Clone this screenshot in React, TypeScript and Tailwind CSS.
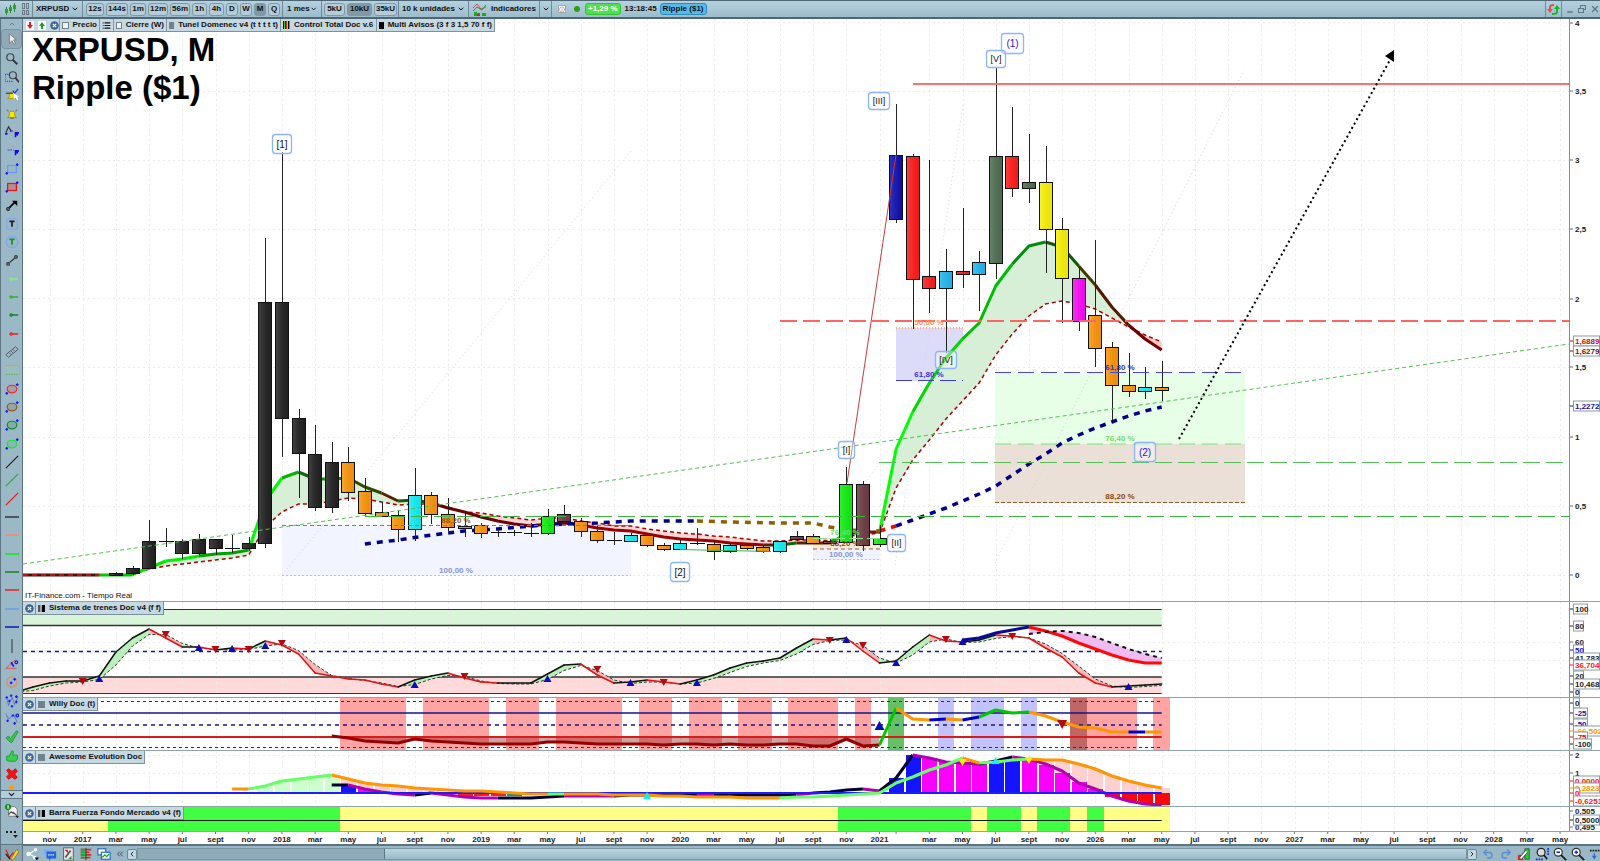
import type { ReactNode } from "react";
import { clsx } from "clsx";
import {
  ChevronDown,
  ChevronLeft,
  ChevronRight,
  ChevronUp,
  ChevronsLeft,
  Info,
  List,
  Minus,
  Redo2,
  Undo2,
  X as Close,
} from "lucide-react";

// Chart coordinates: one slot per month, slot 0 is January 2017.
const LEFT = 23;
const slot = (i: number) => Math.round((82.7 + 16.6 * i) * 10) / 10;

type Point = [number, number];

const path = (points: Point[]) =>
  points.map(([i, y], n) => `${n ? "L" : "M"}${slot(i)} ${y}`).join("");

const band = (a: Point[], b: Point[]) => `${path(a)}${path([...b].reverse()).replace("M", "L")}Z`;

const series = (from: number, values: number[]): Point[] =>
  values.map((y, n) => [from + n, y]);

const ORANGE = "#fb960c";
const CYAN = "#12f0f5";
const BLACK = "#222222";
const RED = "#ff1c1c";
const BROWN = "#6e3d45";
const GREEN = "#10f010";
const SKY = "#22b8f0";
const OLIVE = "#4f6f52";
const YELLOW = "#f9f208";

// slot, colour, high, body top, body bottom, low
const candles: [number, string, number, number, number, number][] = [
  [2, BLACK, 572, 573, 575, 576],
  [3, BLACK, 566, 568, 573, 575],
  [4, BLACK, 520, 541, 568, 569],
  [5, BLACK, 528, 541, 542, 547],
  [6, BLACK, 539, 541, 553, 559],
  [7, BLACK, 534, 539, 553, 555],
  [8, BLACK, 539, 539, 548, 555],
  [9, BLACK, 535, 548, 549, 553],
  [10, BLACK, 537, 543, 548, 551],
  [11, BLACK, 238, 302, 543, 548],
  [12, BLACK, 152, 302, 418, 457],
  [13, BLACK, 409, 418, 453, 498],
  [14, BLACK, 425, 454, 507, 511],
  [15, BLACK, 442, 462, 507, 513],
  [16, ORANGE, 447, 462, 492, 501],
  [17, ORANGE, 478, 491, 513, 517],
  [18, ORANGE, 502, 512, 516, 517],
  [19, ORANGE, 511, 515, 529, 542],
  [20, CYAN, 468, 495, 529, 541],
  [21, ORANGE, 492, 495, 514, 524],
  [22, ORANGE, 498, 514, 527, 531],
  [23, ORANGE, 513, 526, 528, 537],
  [24, ORANGE, 523, 525, 533, 538],
  [25, BLACK, 530, 532, 533, 537],
  [26, BLACK, 530, 532, 533, 536],
  [27, BLACK, 523, 533, 534, 537],
  [28, GREEN, 509, 516, 533, 535],
  [29, BROWN, 505, 514, 521, 521],
  [30, ORANGE, 518, 521, 531, 537],
  [31, ORANGE, 525, 531, 540, 543],
  [32, BLACK, 532, 540, 541, 545],
  [33, CYAN, 533, 535, 541, 542],
  [34, ORANGE, 533, 535, 545, 547],
  [35, ORANGE, 543, 545, 549, 551],
  [36, CYAN, 540, 543, 549, 550],
  [37, BROWN, 528, 543, 544, 545],
  [38, ORANGE, 541, 544, 551, 560],
  [39, CYAN, 543, 545, 551, 553],
  [40, ORANGE, 544, 545, 548, 550],
  [41, ORANGE, 545, 547, 551, 553],
  [42, CYAN, 541, 541, 551, 553],
  [43, BROWN, 531, 536, 539, 541],
  [44, ORANGE, 534, 536, 543, 544],
  [45, BROWN, 539, 541, 543, 544],
  [46, GREEN, 467, 484, 542, 543],
  [47, BROWN, 481, 484, 545, 551],
  [48, GREEN, 525, 538, 544, 547],
  [49, "#1010b0", 104, 155, 219, 223],
  [50, RED, 154, 156, 279, 329],
  [51, RED, 160, 276, 288, 313],
  [52, SKY, 249, 271, 288, 353],
  [53, RED, 208, 271, 274, 288],
  [54, SKY, 251, 262, 274, 311],
  [55, OLIVE, 68, 156, 263, 279],
  [56, RED, 107, 156, 188, 197],
  [57, OLIVE, 134, 182, 188, 203],
  [58, YELLOW, 146, 182, 229, 273],
  [59, YELLOW, 218, 229, 278, 323],
  [60, "#fc0cfa", 267, 278, 321, 331],
  [61, ORANGE, 240, 315, 348, 367],
  [62, ORANGE, 342, 347, 385, 421],
  [63, ORANGE, 353, 385, 391, 397],
  [64, CYAN, 367, 387, 391, 399],
  [65, ORANGE, 361, 387, 390, 401],
];

const tunnel = series(3, [
  574, 568, 561, 559, 556, 554, 553, 550, 501, 478, 472, 479, 479, 478, 487, 493, 501, 500, 503,
  508, 512, 517, 521, 524, 526, 524, 523, 525, 528, 530, 531, 534, 537, 539, 540, 541, 543, 544,
  545, 545, 543, 543, 543, 534, 532, 532, 449, 412, 383, 358, 339, 323, 286, 264, 246, 242, 247,
  266, 285, 307, 325, 339, 350,
]);

const tunnelSignal = series(3, [
  575, 569, 566, 564, 562, 560, 558, 555, 527, 512, 504, 504, 501, 498, 499, 502, 505, 504, 504,
  507, 512, 513, 516, 518, 520, 518, 518, 521, 523, 526, 526, 529, 531, 533, 534, 536, 537, 539,
  541, 541, 540, 540, 541, 536, 535, 533, 488, 460, 440, 419, 401, 383, 355, 334, 316, 304, 301,
  304, 309, 318, 327, 335, 342,
]);

const at = (points: Point[], from: number, to: number) =>
  points.filter(([i]) => i >= from && i <= to);

// from, to, colour
const tunnelColors: [number, number, string][] = [
  [3, 5, "#00e800"],
  [5, 7, "#00f200"],
  [7, 10, "#00a000"],
  [10, 12, "#00f800"],
  [12, 13, "#00b400"],
  [13, 14, "#0a6a0a"],
  [14, 16, "#00920c"],
  [16, 18, "#2c4a00"],
  [18, 19, "#552200"],
  [19, 21, "#1d5a00"],
  [21, 28, "#700000"],
  [28, 30, "#5c0c0c"],
  [30, 41, "#9c0000"],
  [41, 42, "#5a2400"],
  [42, 43, "#0a6a0a"],
  [43, 45, "#552800"],
  [45, 46, "#00b400"],
  [46, 48, "#7c1414"],
  [48, 50, "#00ff00"],
  [50, 53, "#00d800"],
  [53, 56, "#00bc00"],
  [56, 58, "#008c10"],
  [58, 60, "#145a00"],
  [60, 61, "#3c3c00"],
  [61, 63, "#501a00"],
  [63, 65, "#700000"],
];

const slowA: Point[] = [[17, 544], [19, 540], [21, 535], [23, 531], [25, 529], [27, 526], [29, 524], [31, 523], [33, 521], [37, 521]];
const slowB: Point[] = [[37, 521], [39, 522], [42, 523], [44, 523], [45, 527], [46, 530], [48, 531]];
const slowC = series(49, [526, 520, 514, 508, 501, 494, 486, 475, 464, 454, 443, 435, 428, 422, 416, 411, 407]);

const months: [number, string][] = [
  [-2, "nov"], [0, "2017"], [2, "mar"], [4, "may"], [6, "jul"], [8, "sept"], [10, "nov"],
  [12, "2018"], [14, "mar"], [16, "may"], [18, "jul"], [20, "sept"], [22, "nov"],
  [24, "2019"], [26, "mar"], [28, "may"], [30, "jul"], [32, "sept"], [34, "nov"],
  [36, "2020"], [38, "mar"], [40, "may"], [42, "jul"], [44, "sept"], [46, "nov"],
  [48, "2021"], [49, ""], [51, "mar"], [53, "may"], [55, "jul"], [57, "sept"], [59, "nov"],
  [61, "2026"], [63, "mar"], [65, "may"], [67, "jul"], [69, "sept"], [71, "nov"],
  [73, "2027"], [75, "mar"], [77, "may"], [79, "jul"], [81, "sept"], [83, "nov"],
  [85, "2028"], [87, "mar"], [89, "may"],
];

const trains = series(-4, [
  692, 687, 683, 681, 681, 676, 652, 638, 629, 638, 647, 647, 650, 648, 649, 641, 645, 654, 673,
  676, 679, 680, 684, 687, 680, 676, 673, 678, 682, 683, 683, 683, 674, 665, 664, 675, 683, 682,
  680, 682, 684, 680, 675, 668, 663, 661, 658, 648, 639, 640, 638, 651, 663, 661, 647, 635, 641,
  642, 640, 635, 636, 638, 648, 657, 673, 683, 687, 686, 685, 684,
]);
const trainsSignal: Point[] = trains.map(([i, y], n) => [i, n ? (y + trains[n - 1][1]) / 2 + 1 : y]);

const trainDowns: Point[] = [[0, 681], [5, 634], [8, 649], [10, 649], [12, 643], [23, 676], [31, 669], [35, 682], [45, 640], [47, 645], [52, 639], [56, 636]];
const trainUps: Point[] = [[1, 679], [7, 648], [9, 649], [11, 646], [20, 685], [28, 679], [33, 683], [37, 683], [46, 640], [49, 663], [53, 642], [63, 687]];

const trendUp = series(53, [640, 638, 633, 630, 627]);
const trendDown = series(57, [627, 631, 636, 643, 649, 655, 660, 663, 663]);
const trendDots = series(57, [634, 632, 631, 633, 637, 643, 649, 654, 658]);

// from, to, colour
const willyZones: [number, number, string][] = [
  [15.5, 19.5, "#ffa3a3"], [20.5, 24.5, "#ffa3a3"], [25.5, 27.5, "#ffa3a3"],
  [28.5, 32.5, "#ffa3a3"], [33.5, 35.5, "#ffa3a3"], [36.5, 38.5, "#ffa3a3"],
  [39.5, 41.5, "#ffa3a3"], [42.5, 45.5, "#ffa3a3"], [46.5, 47.5, "#ffa3a3"],
  [48.5, 49.5, "#66c166"], [51.5, 52.5, "#c2c2fc"], [53.5, 55.5, "#c2c2fc"],
  [56.5, 57.5, "#c2c2fc"], [59.5, 60.5, "#bf6666"], [60.5, 63.5, "#ffa3a3"],
  [64.5, 65.5, "#ffa3a3"],
];

const willy = series(15, [
  736, 738, 741, 742, 743, 739, 741, 742, 743, 744, 744, 744, 744, 742, 742, 743, 744, 744, 744,
  744, 745, 744, 744, 745, 744, 745, 745, 744, 744, 746, 746, 739, 746, 745, 708, 719, 720, 719,
  720, 717, 710, 713, 712, 716, 722, 727, 728, 732, 732, 732, 732,
]);
const willyColors: [number, number, string][] = [
  [15, 48, "#980000"], [48, 49, "#00c800"], [49, 51, "#ff9500"], [51, 52, "#0000c8"],
  [52, 53, "#ff9500"], [53, 54, "#0000c8"], [54, 57, "#00c800"], [57, 63, "#ff9500"],
  [63, 64, "#0000c8"], [64, 65, "#ff9500"],
];

const awesomeSlow = series(9, [
  789, 789, 786, 781, 779, 777, 775, 779, 783, 785, 786, 788, 789, 790, 791, 791, 792, 793, 794,
  794, 794, 794, 794, 795, 795, 795, 796, 796, 797, 797, 797, 798, 798, 798, 797, 797, 796, 795,
  794, 793, 783, 777, 770, 765, 758, 763, 762, 760, 759, 760, 760, 764, 769, 776, 781, 785, 788,
]);
const awesomeSlowColors: [number, number, string][] = [
  [9, 10, "#ff9500"], [10, 15, "#66ff66"], [15, 28, "#ff9500"], [28, 29, "#66ff66"],
  [29, 42, "#ff9500"], [42, 53, "#66ff66"], [53, 54, "#ff9500"], [54, 57, "#66ff66"],
  [57, 65, "#ff9500"],
];
const awesomeFast = series(15, [
  785, 785, 789, 792, 794, 795, 793, 795, 797, 798, 798, 798, 798, 797, 796, 796, 796, 796, 795,
  795, 795, 795, 795, 795, 795, 795, 795, 795, 795, 793, 792, 790, 789, 791, 778, 755, 758, 762,
  763, 764, 761, 757, 759, 764, 771, 783, 789, 796, 801, 804, 805,
]);
const awesomeFastColors: [number, number, string][] = [
  [15, 16, "#000033"], [16, 20, "#b000b0"], [20, 21, "#000033"], [21, 25, "#b000b0"],
  [25, 29, "#000033"], [29, 32, "#b000b0"], [32, 37, "#000033"], [37, 38, "#b000b0"],
  [38, 43, "#000033"], [43, 44, "#b000b0"], [44, 47, "#000033"], [47, 48, "#b000b0"],
  [48, 50, "#000033"], [50, 54, "#b000b0"], [54, 56, "#000033"], [56, 65, "#b000b0"],
];

// slot, value, colour
const awesomeBars: [number, number, string][] = [
  [11, 787, "#ccffcc"], [12, 781, "#ccffcc"], [13, 779, "#ccffcc"], [14, 777, "#ccffcc"], [15, 776, "#ccffcc"],
  [16, 779, "#ffd0d0"], [17, 783, "#ffd0d0"], [18, 785, "#ffd0d0"], [19, 787, "#ffd0d0"],
  [20, 789, "#ffd0d0"], [21, 789, "#ffd0d0"],
  [16, 786, "#1414ff"], [17, 789, "#fa00fa"], [23, 796, RED], [24, 796, RED], [25, 796, RED], [26, 796, "#148c8c"],
  [49, 778, "#1414ff"], [50, 755, "#1414ff"], [51, 758, "#fa00fa"], [52, 762, "#fa00fa"],
  [53, 763, "#fa00fa"], [54, 764, "#fa00fa"], [55, 761, "#1414ff"], [56, 760, "#1414ff"],
  [57, 760, "#fa00fa"], [58, 760, "#ffd0d0"], [58, 765, "#fa00fa"], [59, 761, "#ffd0d0"],
  [59, 773, "#fa00fa"], [60, 764, "#ffd0d0"], [60, 782, "#fa00fa"], [61, 770, "#ffd0d0"],
  [61, 789, "#fa00fa"], [62, 776, "#ffd0d0"], [62, 797, "#f80808"], [63, 781, "#ffd0d0"],
  [63, 801, "#f80808"], [64, 785, "#ffd0d0"], [64, 803, "#f80808"], [65, 788, "#ffd0d0"],
  [65, 805, "#f80808"],
];

const forceZones: [number, number, string][] = [
  [-4, 1.5, "#ffff86"], [1.5, 15.5, "#40ff40"], [15.5, 45.5, "#ffff86"], [45.5, 53.5, "#40ff40"],
  [53.5, 54.5, "#ffff86"], [54.5, 56.5, "#40ff40"], [56.5, 57.5, "#ffff86"],
  [57.5, 59.5, "#40ff40"], [59.5, 60.5, "#ffff86"], [60.5, 61.5, "#40ff40"],
  [61.5, 65.5, "#ffff86"],
];

function Segments({ points, colors, width }: { points: Point[]; colors: [number, number, string][]; width: number }) {
  return (
    <>
      {colors.map(([from, to, color]) => (
        <path key={from} d={path(at(points, from, to))} stroke={color} strokeWidth={width} fill="none" strokeLinejoin="round" />
      ))}
    </>
  );
}

function Triangle({ i, y, color, down, size = 4 }: { i: number; y: number; color: string; down?: boolean; size?: number }) {
  const x = slot(i);
  const s = down ? -1 : 1;
  return <path d={`M${x - size} ${y + (size - 1) * s}h${size * 2}L${x} ${y - size * s}Z`} fill={color} />;
}

function Zones({ zones, top, height }: { zones: [number, number, string][]; top: number; height: number }) {
  return (
    <>
      {zones.map(([from, to, color]) => (
        <rect
          key={from}
          x={Math.round(slot(from))}
          y={top}
          width={Math.round(slot(to)) - Math.round(slot(from))}
          height={height}
          fill={color}
        />
      ))}
    </>
  );
}

function HLine({ y, color = "#333", width = 1, dash, from = LEFT, to = slot(65) }: {
  y: number; color?: string; width?: number; dash?: string; from?: number; to?: number;
}) {
  return <line x1={from} x2={to} y1={y} y2={y} stroke={color} strokeWidth={width} strokeDasharray={dash} />;
}

function Grid({ top, height, rows = [] }: { top: number; height: number; rows?: number[] }) {
  return (
    <g stroke="#ebebeb" strokeDasharray="2 3">
      {months.filter(([, name]) => name).map(([i]) => (
        <line key={i} x1={Math.round(slot(i)) + 0.5} x2={Math.round(slot(i)) + 0.5} y1={top} y2={top + height} />
      ))}
      {rows.map((y) => (
        <line key={y} x1={LEFT} x2="4000" y1={y + 0.5} y2={y + 0.5} />
      ))}
    </g>
  );
}

type Tag = { y: number; text: string; color?: string; boxed?: boolean };

function Panel({ top, height, tags, header, children, last }: {
  top: number; height: number; tags: Tag[]; header?: ReactNode; children: ReactNode; last?: boolean;
}) {
  return (
    <section className={clsx("relative flex", !last && "border-b border-[#8fa3ae]")}>
      <svg className="block min-w-0 flex-1" height={height}>
        <g transform={`translate(${-LEFT} ${-top})`}>{children}</g>
      </svg>
      <svg className="block w-[31px] shrink-0 border-l border-[#7d929e] bg-white" height={height}>
        <g transform={`translate(0 ${-top})`} className="text-[8px] font-bold">
          {tags.map(({ y, text, color = "#222", boxed }) => (
            <g key={text + y}>
              <line x1="0" x2="3" y1={y} y2={y} stroke={boxed ? color : "#667"} />
              {boxed && (
                <rect x="3.5" y={y - 5} width={text.length * 4 + 2} height="10" fill="#fff" stroke="#8a9ba5" />
              )}
              <text x="5" y={y + 3} fill={color}>{text}</text>
            </g>
          ))}
        </g>
      </svg>
      {header}
    </section>
  );
}

function CloseDot() {
  return (
    <svg width="9" height="9" viewBox="0 0 9 9">
      <circle cx="4.5" cy="4.5" r="4.3" fill="#3f6698" />
      <path d="M2.8 2.8l3.4 3.4M6.2 2.8L2.8 6.2" stroke="#fff" strokeWidth="1.2" />
    </svg>
  );
}

function Swatch({ bars }: { bars?: boolean }) {
  return bars ? (
    <svg width="7" height="7"><rect width="2" height="7" fill="#556" /><rect x="2" width="2" height="7" fill="#9aa" /><rect x="4" width="3" height="7" fill="#000" /></svg>
  ) : (
    <span className="size-[7px] bg-[#71828c]" />
  );
}

function PanelHeader({ title, bars }: { title: string; bars?: boolean }) {
  return (
    <div className="absolute top-0 left-0 flex h-[13px] items-center border-r border-b border-[#7e929e] bg-[#c6d8e1] text-[8px] font-bold">
      <button aria-label={`Cerrar ${title}`} className="flex h-full w-[13px] items-center justify-center border-r border-[#7e929e]">
        <CloseDot />
      </button>
      <span className="flex items-center gap-1 px-[2px]"><Swatch bars={bars} />{title}</span>
    </div>
  );
}

// left, top, width, height, text, colour, size
const waves: [number, number, number, number, string, string, number][] = [
  [272, 134, 19, 19, "[1]", "#111", 10],
  [670, 562, 19, 19, "[2]", "#111", 10],
  [838, 441, 16, 17, "[I]", "#111", 9],
  [887, 534, 18, 17, "[II]", "#111", 9],
  [868, 92, 21, 17, "[III]", "#111", 9],
  [935, 351, 21, 17, "[IV]", "#111", 9],
  [1001, 33, 22, 20, "(1)", "#2a12e8", 10],
  [986, 50, 19, 17, "[V]", "#111", 9],
  [1134, 442, 21, 19, "(2)", "#2a12e8", 10],
];

// x, y, text, colour
const levels: [number, number, string, string][] = [
  [456, 523, "88,20 %", "#8a5a20"],
  [456, 573, "100,00 %", "#8796cf"],
  [845, 535, "76,40 %", "#6fdc6f"],
  [845, 546, "88,20 %", "#8a4a10"],
  [846, 557, "100,00 %", "#8796cf"],
  [929, 325, "50,00 %", "#ff8a5c"],
  [929, 377, "61,80 %", "#3434d0"],
  [1120, 370, "61,80 %", "#3434d0"],
  [1120, 441, "76,40 %", "#6fdc6f"],
  [1120, 499, "88,20 %", "#8a4a10"],
];

function PricePlot() {
  return (
    <>
      <defs>
        <linearGradient id="shade">
          <stop offset="0" stopColor="#fff" stopOpacity="0.14" />
          <stop offset="1" stopColor="#000" stopOpacity="0.05" />
        </linearGradient>
      </defs>
      <Grid top={19} height={581} rows={[22, 91, 160, 229, 298, 367, 437, 506, 575]} />

      <rect x="282" y="526" width="349" height="50" fill="#f2f5ff" />
      <rect x="813" y="538" width="67" height="11" fill="#f4e9df" />
      <rect x="813" y="549" width="67" height="11" fill="#f0f3ff" />
      <rect x="896" y="328" width="67" height="53" fill="#dcdcf8" />
      <rect x="995" y="373" width="250" height="71" fill="#e7ffe7" />
      <rect x="995" y="444" width="250" height="59" fill="#ebe0d7" />

      <g stroke="#d4d4d4" strokeDasharray="1 3" fill="none">
        <path d="M282 575L631 151M813 559L880 462M895 565L963 105M995 563L1244 70" />
      </g>

      <path d={band(at(tunnel, 3, 21), at(tunnelSignal, 3, 21))} fill="#d6efd6" />
      <path d={band(at(tunnel, 21, 48), at(tunnelSignal, 21, 48))} fill="#ffd6d6" />
      <path d={band(at(tunnel, 48, 63), at(tunnelSignal, 48, 63))} fill="#d6efd6" />
      <path d={band(at(tunnel, 63, 65), at(tunnelSignal, 63, 65))} fill="#ffc4c4" />
      <HLine y={575} color="#00c800" width={3} from={slot(1)} to={slot(3)} />
      <HLine y={575} color="#4a1208" width={3} to={slot(1)} />
      <HLine y={575} color="#b01414" width={2} to={slot(1)} dash="5 4" />
      <path d={path(tunnelSignal)} stroke="#a80000" strokeWidth="1.5" strokeDasharray="4 3" fill="none" />
      <Segments points={tunnel} colors={tunnelColors} width={3} />

      <g fill="none" strokeWidth="3.5" strokeDasharray="6 6">
        <path d={path(slowA)} stroke="#00008c" />
        <path d={path(slowB)} stroke="#8f6000" />
        <path d={path([[48, 531], [49, 526]])} stroke="#ff0000" />
        <path d={path(slowC)} stroke="#00008c" />
      </g>

      {candles.map(([i, color, high, top, bottom, low]) => {
        const x = Math.round(slot(i));
        return (
          <g key={i}>
            <line x1={x + 0.5} x2={x + 0.5} y1={high} y2={low} stroke="#222" strokeWidth="1" />
            {bottom - top > 1 ? (
              <>
                <rect x={x - 6.5} y={top + 0.5} width="13" height={bottom - top} fill={color} stroke="#111" />
                <rect x={x - 6} y={top + 1} width="12" height={bottom - top - 1} fill="url(#shade)" />
              </>
            ) : (
              <line x1={x - 7} x2={x + 8} y1={top + 0.5} y2={top + 0.5} stroke="#111" />
            )}
          </g>
        );
      })}

      <HLine y={84} color="#ff7070" width={2} from={913} to={4000} />
      <HLine y={321} color="#ff6464" width={2} from={780} to={4000} dash="17 6" />
      <HLine y={462.5} color="#52c052" from={879} to={4000} dash="17 6" />
      <HLine y={516.5} color="#3cb43c" from={365} to={4000} dash="17 6" />
      <line x1="680" y1="549.5" x2="771" y2="551.5" stroke="#3cb43c" />
      <line x1="23" y1="564" x2="1569" y2="344" stroke="#52c052" strokeDasharray="4 3" />
      <line x1="847" y1="483" x2="896" y2="155" stroke="#c83c3c" />

      <HLine y={525.5} color="#a07844" from={282} to={631} dash="4 3" />
      <HLine y={575.5} color="#b4c0f0" from={282} to={631} dash="2 2" />
      <HLine y={538.5} color="#8ce08c" from={813} to={880} dash="14 4" />
      <HLine y={549} color="#9a6630" from={813} to={880} dash="4 3" />
      <HLine y={559.5} color="#b4c0f0" from={813} to={880} dash="2 2" />
      <HLine y={328} color="#ffae84" from={896} to={963} dash="1 2" width={2} />
      <HLine y={380.5} color="#3c3cd8" from={896} to={963} dash="16 6" />
      <HLine y={372.5} color="#4646e0" from={995} to={1245} dash="16 7" />
      <HLine y={444} color="#7ce27c" from={995} to={1245} dash="16 7" />
      <HLine y={502.5} color="#8a5a30" from={995} to={1245} dash="4 2" />

      <line x1="1179" y1="439" x2="1390" y2="60" stroke="#000" strokeWidth="2" strokeDasharray="2 3" />
      <path d="M1385 56L1394 50V62Z" fill="#000" />

      <g className="text-[8px] font-bold" textAnchor="middle">
        {levels.map(([x, y, text, color]) => (
          <text key={x + text} x={x} y={y} fill={color}>{text}</text>
        ))}
      </g>
      {waves.map(([x, y, w, h, text, color, size]) => (
        <g key={text}>
          <rect x={x + 0.5} y={y + 0.5} width={w} height={h} rx="3" fill="#fff" fillOpacity="0.4" stroke="#8db4ff" strokeWidth="1.3" />
          <text x={x + w / 2 + 0.5} y={y + h / 2 + size / 2 - 1} fontSize={size} textAnchor="middle" fill={color}>{text}</text>
        </g>
      ))}
      <text x="25" y="598" className="text-[8px]" fill="#111">IT-Finance.com - Tiempo Real</text>
    </>
  );
}

const priceTags: Tag[] = [
  { y: 23, text: "4" }, { y: 91, text: "3,5" }, { y: 160, text: "3" }, { y: 229, text: "2,5" },
  { y: 299, text: "2" }, { y: 367, text: "1,5" }, { y: 437, text: "1" }, { y: 506, text: "0,5" },
  { y: 575, text: "0" },
  { y: 341, text: "1,6889", color: "#b01414", boxed: true },
  { y: 351, text: "1,6279", color: "#701414", boxed: true },
  { y: 406, text: "1,2272", color: "#1414a0", boxed: true },
];

const trainTags: Tag[] = [
  { y: 609, text: "100", boxed: true }, { y: 626, text: "80", boxed: true }, { y: 642, text: "60" },
  { y: 650, text: "50", color: "#1414d0", boxed: true }, { y: 658, text: "41,783", boxed: true },
  { y: 665, text: "36,704", color: "#ff1414", boxed: true }, { y: 676, text: "20", boxed: true },
  { y: 692, text: "0", boxed: true }, { y: 684, text: "10,468", boxed: true },
];

const willyTags: Tag[] = [
  { y: 703, text: "0", boxed: true }, { y: 724, text: "-50", color: "#1414a0", boxed: true },
  { y: 713, text: "-25", color: "#1414a0", boxed: true },
  { y: 731, text: "-66,502", color: "#ff9500", boxed: true },
  { y: 737, text: "-75", color: "#c81414", boxed: true }, { y: 744, text: "-100", boxed: true },
];

const awesomeTags: Tag[] = [
  { y: 755, text: "2" }, { y: 773, text: "1" },
  { y: 781, text: "0,0000", color: "#ff1414", boxed: true },
  { y: 788, text: "0,2823", color: "#ff9500", boxed: true },
  { y: 793, text: "0", color: "#ff1414", boxed: true },
  { y: 801, text: "-0,6251", color: "#ff1414", boxed: true },
];

const forceTags: Tag[] = [
  { y: 811, text: "0,505" }, { y: 827, text: "0,495" }, { y: 820, text: "0,5000", boxed: true },
];

function Glyph({ children }: { children: ReactNode }) {
  return <svg width="14" height="14" viewBox="0 0 16 16" fill="none" strokeWidth="1.4">{children}</svg>;
}

const corner = (x: number, y: number) => <path d={`M${x - 1.5} ${y}h3M${x} ${y - 1.5}v3`} stroke="#1818e8" />;
const ray = (color: string) => <Glyph><circle cx="7" cy="8" r="1.3" stroke={color} /><path d="M8 8h7" stroke={color} strokeWidth="1.6" /></Glyph>;
const oval = (color: string) => (
  <Glyph><ellipse cx="8" cy="8" rx="5.5" ry="4.3" stroke={color} fill={color} fillOpacity="0.2" />{corner(2, 13)}{corner(14, 3)}</Glyph>
);
const slash = (color: string) => <Glyph><path d="M1 15L15 1" stroke={color} strokeWidth="1.5" /></Glyph>;
const level = (color: string) => <Glyph><path d="M0 8h16" stroke={color} strokeWidth="1.5" /></Glyph>;

const bell = "M3 12c2-1 2-3 2-5 0-3 6-3 6 0 0 2 0 4 2 5z";
const thumb = "M2 8h3l3-6c2 0 2 2 1 5h5c1 3 0 6-2 7H5L2 13z";

const tools: [string, ReactNode][] = [
  ["Puntero", <Glyph><path d="M5 2v11l3-3 2 4 2-1-2-4h3z" fill="#eee" stroke="#777" strokeWidth="1" /></Glyph>],
  ["Lupa", <Glyph><circle cx="6" cy="6" r="4" stroke="#444" /><path d="M9 9l5 5" stroke="#333" strokeWidth="2.2" /></Glyph>],
  ["Zoom de zona", <Glyph><path d="M0 5h5M0 5v8h9" stroke="#2860d0" strokeDasharray="1.5 1" /><circle cx="9" cy="6" r="4" stroke="#444" /><path d="M12 9l4 5" stroke="#333" strokeWidth="2" /></Glyph>],
  ["Alerta en objeto", <Glyph><path d={bell} fill="#f2e20c" stroke="#a89400" strokeWidth="1" /><path d="M1 6h8" stroke="#444" /><path d="M9 3l2 3 4-5" stroke="#1a3cf0" /><path d="M10 6v7l2-2 2 3 1-1-1-3h2z" fill="#fff" /></Glyph>],
  ["Alerta", <Glyph><path d={bell} fill="#f6e610" stroke="#a08c00" strokeWidth="1" /><path d="M6 13h4M2 3l2 2M14 3l-2 2" stroke="#777" /></Glyph>],
  ["Retroceso", <Glyph><path d="M1 9L4 2l3 5" stroke="#333" /><path d="M0 10h3M6 7h3" stroke="#1a1af0" strokeWidth="2" /><path d="M7 7h8" stroke="#ff8a66" strokeWidth="1" /><path d="M12 14V9h4M12 11h3" stroke="#0a0af0" strokeWidth="1.8" /></Glyph>],
  ["Proyección", <Glyph><path d="M3 5h12" stroke="#ff8a66" strokeWidth="1" /><path d="M3 8h7" stroke="#3050e0" strokeDasharray="2 1" /><path d="M12 14V9h4M12 11h3" stroke="#0a0af0" strokeWidth="1.8" /></Glyph>],
  ["Rectángulo", <Glyph><rect x="3" y="4" width="10" height="8" stroke="#6a9af0" />{corner(2, 13)}{corner(14, 3)}</Glyph>],
  ["Rectángulo rojo", <Glyph><rect x="3" y="4" width="10" height="8" stroke="#f01010" fill="#f01010" fillOpacity="0.25" />{corner(2, 13)}{corner(14, 3)}</Glyph>],
  ["Flecha", <Glyph><circle cx="3.5" cy="12.5" r="1.6" stroke="#222" /><path d="M5 11l6-6" stroke="#000" strokeWidth="2" /><path d="M8 3h6v6z" fill="#000" /></Glyph>],
  ["Texto", <Glyph><rect x="2" y="2" width="12" height="12" rx="2" stroke="#7da8ee" /><path d="M5 5h6M8 5v6" stroke="#222" strokeWidth="2" /></Glyph>],
  ["Globo", <Glyph><circle cx="8" cy="8" r="6.5" stroke="#7da8ee" /><path d="M5 5h6M8 5v6" stroke="#189030" strokeWidth="2" /></Glyph>],
  ["Segmento", <Glyph><circle cx="3.5" cy="12.5" r="1.5" stroke="#333" /><circle cx="12.5" cy="4.5" r="1.5" stroke="#333" /><path d="M5 11l6-5" stroke="#333" /></Glyph>],
  ["Rayo verde claro", ray("#86f086")],
  ["Rayo verde", ray("#2cae2c")],
  ["Rayo verde oscuro", ray("#107c20")],
  ["Rayo rojo", ray("#f01414")],
  ["Regla", <Glyph><path d="M1 11L12 2l3 3-11 9zM5 9l2 2M7 7l2 2M9 5l2 2" stroke="#555" strokeWidth="1" /></Glyph>],
  ["Canal", <Glyph><rect x="1" y="2" width="14" height="12" fill="#9fc0ac" /><path d="M1 3h14" stroke="#d09090" strokeDasharray="2 1" /><path d="M1 13h14" stroke="#60b080" strokeDasharray="2 1" /><path d="M1 10l4-3 3 2 3-4 4 3" stroke="#8fb6e8" /></Glyph>],
  ["Elipse roja", oval("#e83030")],
  ["Elipse marrón", oval("#8a5c2a")],
  ["Elipse verde", oval("#158a2a")],
  ["Elipse lima", oval("#28d848")],
  ["Línea", slash("#222")],
  ["Línea verde", slash("#2cae2c")],
  ["Línea roja", slash("#f01414")],
  ["Horizontal negra", level("#222")],
  ["Horizontal salmón", level("#ff8260")],
  ["Horizontal lima", level("#00ee00")],
  ["Horizontal verde", level("#0a7a10")],
  ["Horizontal roja", level("#ee1010")],
  ["Horizontal celeste", level("#6496f0")],
  ["Horizontal azul", level("#0000b0")],
  ["Vertical", <Glyph><path d="M8 0v16" stroke="#222" strokeWidth="1" /></Glyph>],
  ["Ángulo", <Glyph><path d="M1 13h12M1 13L12 3" stroke="#e05050" strokeWidth="1" /><path d="M7 6l3 5" stroke="#1a1ae8" strokeWidth="2" /><circle cx="13" cy="6" r="1.5" stroke="#1a1ae8" /></Glyph>],
  ["Ciclo", <Glyph><circle cx="8" cy="8" r="6" stroke="#f08848" />{corner(7, 9)}{corner(11, 5)}</Glyph>],
  ["Ondas 1-5", <Glyph>{corner(2, 4)}{corner(7, 2)}{corner(13, 3)}{corner(5, 8)}{corner(13, 9)}{corner(8, 14)}<path d="M2 5l2 8 4-9 3 8 4-9" stroke="#3434e0" strokeWidth="0.6" /></Glyph>],
  ["Ondas a-b-c", <Glyph>{corner(9, 4)}{corner(3, 10)}{corner(11, 13)}<path d="M1 2l3 6 6-5 4 9" stroke="#3434e0" strokeWidth="0.6" /><circle cx="14" cy="4" r="1.5" stroke="#1a1ae8" /></Glyph>],
  ["Aceptar", <Glyph><path d="M1 9l3-2 2 3 7-9 2 1-7 12H6z" fill="#34c848" stroke="#1a8a2c" strokeWidth="0.8" /></Glyph>],
  ["Me gusta", <Glyph><path d={thumb} fill="#38d048" stroke="#1a9a2c" strokeWidth="1" /></Glyph>],
  ["Borrar", <Glyph><path d="M4 2l4 3 4-3 2 3-3 3 3 4-3 2-3-3-4 3-2-3 3-3-3-4z" fill="#f41414" stroke="#c00808" strokeWidth="1" /></Glyph>],
];

function Sidebar() {
  return (
    <aside className="flex w-[23px] shrink-0 flex-col border-r border-l border-[#5d7482] bg-[#9ab8c6]">
      <button aria-label="Subir" className="flex h-[10px] items-center justify-center text-[#4c5c66]">
        <ChevronUp size={8} />
      </button>
      <div className="flex flex-1 flex-col">
        {tools.map(([name, glyph], n) => (
          <button
            key={name}
            aria-label={name}
            className={clsx("flex flex-1 items-center justify-center", n === 0 && "rounded-sm border border-[#7c929e] bg-[#8fa9b6]")}
          >
            {glyph}
          </button>
        ))}
      </div>
      <div className="flex h-[7px] items-end justify-center overflow-hidden">
        <span className="size-[5px] rotate-45 bg-[#f0a020]" />
      </div>
      <button aria-label="Bajar" className="flex h-[9px] items-center justify-center border-y border-[#5d7482] bg-[#b4ced9]">
        <ChevronDown size={9} strokeWidth={3} />
      </button>
      <button aria-label="Informe" className="flex h-6 items-center justify-center">
        <Glyph>
          <path d="M4 3h7l3 3v8H4z" fill="#f4f4f4" stroke="#777" strokeWidth="1" />
          <circle cx="3.5" cy="3.5" r="3.5" fill="#168a1c" />
          <path d="M3.5 1.5v4" stroke="#fff" />
          <path d="M4 12l3-3 3 2M9 9l5 5" stroke="#555" /><path d="M12 14h4l-2 2z" fill="#000" />
        </Glyph>
      </button>
      <button aria-label="Más herramientas" className="flex h-[21px] items-center justify-center">
        <svg width="14" height="8"><path d="M1 2h2M5 2h2M9 2h2" stroke="#222" strokeWidth="2" /><path d="M8 5h5l-2.5 3z" fill="#222" /></svg>
      </button>
      <button aria-label="Dibujar" className="flex h-[18px] items-center justify-center border-t border-[#5d7482] bg-[#8aa4b1]">
        <Glyph>
          <path d="M1 3l4 9 4-5 2 5" stroke="#d02020" /><path d="M1 8l5 6" stroke="#222" />
          <path d="M7 13l6-10 3 2-6 9-3 1z" fill="#f4d030" stroke="#8a6a10" strokeWidth="0.8" />
        </Glyph>
      </button>
    </aside>
  );
}

const bar = "flex h-full items-center border-r border-[#6f8a98]";

function UnitButton({ label, width, active }: { label: string; width: string; active?: boolean }) {
  return (
    <button
      className={clsx(
        "flex h-[13px] items-center justify-center rounded-[3px] border border-[#7f99a6]",
        width,
        active ? "bg-[#8299a5]" : "bg-[#b3ccd8]"
      )}
    >
      {label}
    </button>
  );
}

function TopBar() {
  return (
    <header className="flex h-[19px] items-center border-t border-b-2 border-[#4f6674] bg-linear-to-b from-[#b5d1df] to-[#9dbccb] text-[8px] font-bold whitespace-nowrap text-[#111]">
      <svg className="ml-1 shrink-0" width="13" height="14">
        <path d="M2.5 5v8M6.5 3v8M10.5 1v9" stroke="#2c8a2c" />
        <path d="M1 7h3v4H1zM5 5h3v4H5zM9 3h3v4H9z" fill="#28a428" />
      </svg>
      <svg className="ml-[5px] shrink-0" width="7" height="13">
        <g fill="none" stroke="#6a7a84"><rect x=".5" y=".5" width="2" height="5" /><rect x="4.5" y=".5" width="2" height="5" /><rect x=".5" y="7.5" width="2" height="4" /><rect x="4.5" y="7.5" width="2" height="4" /></g>
      </svg>
      <button className={clsx(bar, "ml-[3px] w-[51px] justify-between border-l px-[3px]")}>XRPUSD <ChevronDown size={8} strokeWidth={3} /></button>
      <div className={clsx(bar, "w-[200px] gap-[2px] pl-[3px]")}>
        <UnitButton label="12s" width="w-[18px]" />
        <UnitButton label="144s" width="w-[22px]" />
        <UnitButton label="1m" width="w-[16px]" />
        <UnitButton label="12m" width="w-[20px]" />
        <UnitButton label="56m" width="w-[20px]" />
        <UnitButton label="1h" width="w-[15px]" />
        <UnitButton label="4h" width="w-[15px]" />
        <UnitButton label="D" width="w-[12px]" />
        <UnitButton label="W" width="w-[12px]" />
        <UnitButton label="M" width="w-[12px]" active />
        <UnitButton label="Q" width="w-[12px]" />
      </div>
      <button className={clsx(bar, "w-[39px] justify-between px-1")}>1 mes <ChevronDown size={8} strokeWidth={3} /></button>
      <div className={clsx(bar, "w-[77px] gap-[2px] pl-[2px]")}>
        <UnitButton label="5kU" width="w-[21px]" />
        <UnitButton label="10kU" width="w-[25px]" active />
        <UnitButton label="35kU" width="w-[23px]" />
      </div>
      <button className={clsx(bar, "w-[70px] justify-between px-[3px]")}>10 k unidades <ChevronDown size={8} strokeWidth={3} /></button>
      <button className={clsx(bar, "w-[71px] gap-1 pl-1")}>
        <svg width="14" height="13">
          <path d="M0 5l4-4 4 5 5-2" stroke="#d05050" fill="none" /><path d="M0 8l4-4 5 3 4-5" stroke="#20a030" fill="none" />
          <path d="M1 13V9h3v1h3v3zM9 13v-3h4v3z" fill="#18b018" /><path d="M4 11h3v2H4z" fill="#e02020" />
        </svg>
        Indicadores
      </button>
      <button aria-label="Más indicadores" className={clsx(bar, "w-3 justify-center")}><ChevronDown size={8} strokeWidth={3} /></button>
      <button aria-label="Información" className="ml-[6px] flex size-2 items-center justify-center border border-[#a8a8a8] bg-white text-[#777]"><Info size={7} /></button>
      <span className="ml-2 size-[6px] rounded-full bg-[#329c0c]" />
      <span className="ml-[5px] rounded-[3px] border border-[#30c430] bg-[#50e04e] px-[2px] leading-[10px] text-white">+1,29 %</span>
      <span className="ml-1">13:18:45</span>
      <span className="ml-[3px] rounded-[3px] border border-[#2c8cc0] bg-[#55baea] px-[2px] leading-[10px]">Ripple ($1)</span>
      <div className="ml-auto flex h-full items-center gap-1 text-[#607884]">
        <button aria-label="Sincronizar" className={clsx(bar, "w-[17px] justify-center border-l")}>
          <svg width="13" height="13" fill="none" strokeWidth="2">
            <path d="M3 8V4q0-2 4-2" stroke="#f04848" /><path d="M0 6l3 4 3-4z" fill="#f04848" />
            <path d="M10 5v4q0 2-5 2" stroke="#18b428" /><path d="M7 6l3-4 3 4z" fill="#18b428" />
          </svg>
        </button>
        <button aria-label="Minimizar" className="flex h-full items-end pb-px"><Minus size={8} strokeWidth={4} /></button>
        <button aria-label="Restaurar">
          <svg className="block" width="8" height="8" fill="none" stroke="currentColor"><rect x="2.5" y=".5" width="5" height="4" /><rect x=".5" y="3.5" width="5" height="4" fill="#a9c6d3" /></svg>
        </button>
        <button aria-label="Cerrar"><Close size={10} strokeWidth={3} /></button>
      </div>
    </header>
  );
}

const cell = "flex h-full items-center gap-1 border-r border-[#8498a4] px-[2px]";

function Legend() {
  return (
    <div className="absolute top-0 left-0 flex h-[13px] items-center border-b border-[#7e929e] bg-[#c6d8e1] text-[8px] font-bold whitespace-nowrap">
      <span className={clsx(cell, "w-[37px] pl-[3px]")}>
        <button aria-label="Vender"><svg className="block" width="8" height="9"><rect width="8" height="9" fill="#fff" /><path d="M4 1v4" stroke="#e02020" strokeWidth="2" /><path d="M1 4h6L4 8z" fill="#e02020" /></svg></button>
        <button aria-label="Comprar"><svg className="block" width="8" height="9"><rect width="8" height="9" fill="#fff" /><path d="M4 4v4" stroke="#18a028" strokeWidth="2" /><path d="M1 5h6L4 1z" fill="#18a028" /></svg></button>
        <button aria-label="Cerrar precio"><CloseDot /></button>
      </span>
      <label className={clsx(cell, "w-[40px]")}>
        <input type="checkbox" className="size-[7px] appearance-none border border-[#71828c] bg-[#eef3f5]" />Precio
      </label>
      <button aria-label="Lista" className={clsx(cell, "w-[14px]")}><List size={9} strokeWidth={3} /></button>
      <label className={clsx(cell, "w-[53px]")}>
        <input type="checkbox" className="size-[7px] appearance-none border border-[#71828c] bg-[#eef3f5]" />Cierre (W)
      </label>
      <span className={clsx(cell, "w-[114px]")}><Swatch />Tunel Domenec v4 (t t t t t)</span>
      <span className={clsx(cell, "w-[96px]")}>
        <svg width="7" height="8"><rect width="7" height="8" fill="#000" /><rect x="1" width="1" height="8" fill="#0f0" /><rect x="3" width="1" height="8" fill="#f22" /><rect x="4" width="1" height="8" fill="#2ff" /><rect x="6" width="1" height="8" fill="#f2f" /></svg>
        Control Total Doc v.6
      </span>
      <span className={clsx(cell, "w-[118px]")}><span className="size-[7px] bg-black" />Multi Avisos (3 f 3 1,5 70 f f)</span>
    </div>
  );
}

function BottomBar() {
  return (
    <footer className="flex h-[18px] items-center border-t-2 border-[#5d7482] bg-[#9ab8c6] text-[#333]">
      <div className="flex items-center gap-1 pl-[2px]">
        <button aria-label="Compartir"><Glyph><path d="M12 3L5 8l7 4" stroke="#fff" /><circle cx="4" cy="8" r="2.5" fill="#fff" /><circle cx="12" cy="3" r="2" fill="#fff" /><circle cx="11" cy="12" r="2" fill="#fff" /><path d="M11 12h5l-2.5 3z" fill="#000" /></Glyph></button>
        <button aria-label="Comentarios"><Glyph><path d="M1 2h10v7H1z" fill="#7cb0f4" /><path d="M4 5h11v8H9l-2 3v-3H4z" fill="#2464d8" /><path d="M6 9h7" stroke="#fff" strokeDasharray="1.5 1" /></Glyph></button>
        <button aria-label="Orden"><Glyph><rect x="3" y="1" width="11" height="14" fill="#e8e8e8" stroke="#555" strokeWidth="1" /><path d="M5 12l6-8" stroke="#555" strokeWidth="2" /><path d="M4 3h4v4z" fill="#e02020" /><path d="M12 14v-4l-4 4z" fill="#18a028" /></Glyph></button>
        <button aria-label="Profundidad"><Glyph><path d="M2 3h12M2 6h10M2 9h12M2 12h11" stroke="#d82c2c" strokeWidth="2" /><path d="M2 3h6M2 6h5M2 9h7M2 12h5" stroke="#18a838" strokeWidth="2" /><path d="M8 1v14" stroke="#222" strokeWidth="0.8" /></Glyph></button>
        <button aria-label="Ventanas"><Glyph><rect x="1" y="2" width="9" height="7" fill="#fff" stroke="#2a70c8" /><rect x="5" y="6" width="10" height="8" fill="#fff" stroke="#2a70c8" /><path d="M6 12l3-3 2 2 3-3" stroke="#18a028" /></Glyph></button>
        <button aria-label="Plegar"><ChevronsLeft size={10} /></button>
      </div>
      <button aria-label="Desplazar a la izquierda" className="ml-[2px] flex h-[11px] w-[10px] items-center justify-center rounded-xs border border-[#6d8795] bg-[#c0d8e2]"><ChevronLeft size={8} strokeWidth={3} /></button>
      <div className="flex h-3 min-w-0 flex-1 border border-[#7b95a3] bg-[#8fabb9]">
        <div className="ml-auto w-[81.500%] border-l border-[#5d7482] bg-linear-to-b from-[#b9d6e2] to-[#9ab9c8]" />
      </div>
      <button aria-label="Desplazar a la derecha" className="flex h-[11px] w-[10px] items-center justify-center rounded-xs border border-[#6d8795] bg-[#c0d8e2]"><ChevronRight size={8} strokeWidth={3} /></button>
      <div className="flex items-center gap-1 pl-1">
        <button aria-label="Deshacer" className="flex w-[14px] justify-center text-[#5b8fd0]"><Undo2 size={12} strokeWidth={3} /></button>
        <button aria-label="Rehacer" className="flex w-[14px] justify-center text-[#5b8fd0]"><Redo2 size={12} strokeWidth={3} /></button>
        <button aria-label="Ajustes"><Glyph><path d="M9 2h5v12H9z" fill="#28c838" stroke="#333" strokeWidth="0.8" /><path d="M1 9h6v6H1z" fill="#e02828" /><path d="M4 13l7-8" stroke="#444" strokeWidth="4" /><path d="M4 13l7-8" stroke="#fff" strokeWidth="2" /></Glyph></button>
        <button aria-label="Ajustar escala"><Glyph><circle cx="7" cy="6" r="4.5" fill="#ddd" stroke="#222" /><path d="M10 9l4 5" stroke="#222" strokeWidth="2" /><path d="M15 1v9M1 14h9" stroke="#1a30f0" strokeWidth="2" strokeDasharray="2 1" /></Glyph></button>
        <button aria-label="Alejar"><Glyph><circle cx="6" cy="6" r="4.5" fill="#fff" stroke="#333" /><path d="M9 9l6 6" stroke="#222" strokeWidth="2.2" /><path d="M4 6h4" stroke="#1a30f0" strokeWidth="2" /></Glyph></button>
        <button aria-label="Acercar"><Glyph><circle cx="6" cy="6" r="4.5" fill="#fff" stroke="#333" /><path d="M9 9l6 6" stroke="#222" strokeWidth="2.2" /><path d="M4 6h4M6 4v4" stroke="#1a30f0" strokeWidth="1.6" /></Glyph></button>
        <button aria-label="Más opciones" className="w-[11px] overflow-hidden"><Glyph><path d="M1 4h15" stroke="#222" strokeWidth="2" strokeDasharray="2 1" /><path d="M6 7v6M4 10l2 3 2-3" stroke="#2464d8" /></Glyph></button>
      </div>
    </footer>
  );
}

export default function App() {
  return (
    <div className="w-full overflow-hidden bg-white font-['Liberation_Sans',Arial,sans-serif] text-[#111]">
      <TopBar />
      <div className="flex items-stretch">
        <Sidebar />
        <div className="flex min-w-0 flex-1 flex-col">
          <main className="flex flex-col bg-white">
            <Panel
              top={19}
              height={582}
              tags={priceTags}
              header={
                <>
                  <Legend />
                  <h1 className="absolute top-[12px] left-[9px] text-[33px] leading-[38px] font-bold text-black">
                    XRPUSD, M<br />Ripple ($1)
                  </h1>
                </>
              }
            >
              <PricePlot />
            </Panel>

            <Panel top={602} height={95} tags={trainTags} header={<PanelHeader title="Sistema de trenes Doc v4 (f f)" bars />}>
              <rect x="23" y="609" width={slot(65) - 23} height="17" fill="#d9f5d9" />
              <rect x="23" y="677" width={slot(65) - 23} height="16" fill="#ffdada" />
              <Grid top={602} height={95} rows={[642, 660]} />
              <HLine y={609.5} />
              <HLine y={625.5} width={1.5} />
              <HLine y={677} width={1.5} />
              <HLine y={693.5} />
              <HLine y={651.5} color="#1414a8" width={1.5} dash="4 4" />
              {trains.slice(1).map(([i, y], n) => {
                const prev = trains[n];
                return (
                  <path
                    key={i}
                    d={band([prev, [i, y]], [trainsSignal[n], trainsSignal[n + 1]])}
                    fill={y > prev[1] ? "#f4b8b8" : "#b8f0b8"}
                  />
                );
              })}
              <path d={path(trainsSignal)} fill="none" stroke="#333" strokeDasharray="3 2" strokeWidth="1" />
              {trains.slice(1).map(([i, y], n) => (
                <path key={i} d={path([trains[n], [i, y]])} stroke={y > trains[n][1] ? "#e01414" : "#111"} strokeWidth="1.5" strokeLinecap="round" />
              ))}
              <path d={band(trendDown, trendDots)} fill="#f0bcf0" />
              <path d={path(trendUp)} fill="none" stroke="#0a0a9c" strokeWidth="3" />
              <path d={path(trendDown)} fill="none" stroke="#ff0808" strokeWidth="3" />
              <path d={path(trendDots)} fill="none" stroke="#111" strokeWidth="2" strokeDasharray="4 4" />
              {trainDowns.map(([i, y]) => <Triangle key={i} i={i} y={y} color="#b40c0c" down />)}
              {trainUps.map(([i, y]) => <Triangle key={i} i={i} y={y} color="#0c0cb4" />)}
            </Panel>

            <Panel top={698} height={52} tags={willyTags} header={<PanelHeader title="Willy Doc (t)" />}>
              <Grid top={698} height={52} />
              <Zones zones={willyZones} top={698} height={52} />
              <HLine y={701.5} dash="3 3" />
              <HLine y={713} color="#14148c" width={1.5} />
              <HLine y={725} color="#14148c" width={1.5} dash="4 4" />
              <path d={band(at(willy, 15, 48), [[15, 737], [48, 737]])} fill="#8c1c1c" fillOpacity="0.4" />
              <HLine y={737} color="#d81c1c" width={2} />
              <HLine y={747.5} dash="3 3" />
              <Segments points={willy} colors={willyColors} width={3} />
              <Triangle i={48} y={726} color="#0c0cb4" size={5} />
              <Triangle i={59} y={724} color="#b40c0c" down size={5} />
            </Panel>

            <Panel top={751} height={55} tags={awesomeTags} header={<PanelHeader title="Awesome Evolution Doc" />}>
              <Grid top={751} height={55} rows={[755, 773]} />
              {awesomeBars.map(([i, y, color], n) => (
                <rect key={n} x={Math.round(slot(i)) - 7} y={Math.min(y, 793)} width="15" height={Math.abs(793 - y)} fill={color} />
              ))}
              <Segments points={awesomeFast} colors={awesomeFastColors} width={3} />
              <HLine y={793} color="#1c1cff" width={2} />
              <Segments points={awesomeSlow} colors={awesomeSlowColors} width={3} />
              <Triangle i={34} y={796} color="#14f0f0" />
              <Triangle i={55} y={761} color="#14f0f0" />
              <Triangle i={53} y={762} color="#f4f000" down />
              <Triangle i={57} y={760} color="#f4f000" down />
            </Panel>

            <Panel top={807} height={24} tags={forceTags} header={<PanelHeader title="Barra Fuerza Fondo Mercado v4 (f)" bars />}>
              <Grid top={807} height={24} />
              <Zones zones={forceZones} top={807} height={24} />
              <HLine y={820.5} color="#111" />
            </Panel>

            <svg className="block w-full" height="12">
              <g transform={`translate(${-LEFT} 0)`} className="text-[8px] font-bold">
                {months.map(([i, name]) => (
                  <g key={i}>
                    <line x1={slot(i)} x2={slot(i)} y1="0" y2="2" stroke="#678" />
                    <text x={slot(i)} y="10" textAnchor="middle" fill="#222">{name}</text>
                  </g>
                ))}
              </g>
            </svg>
          </main>
          <BottomBar />
        </div>
      </div>
    </div>
  );
}
